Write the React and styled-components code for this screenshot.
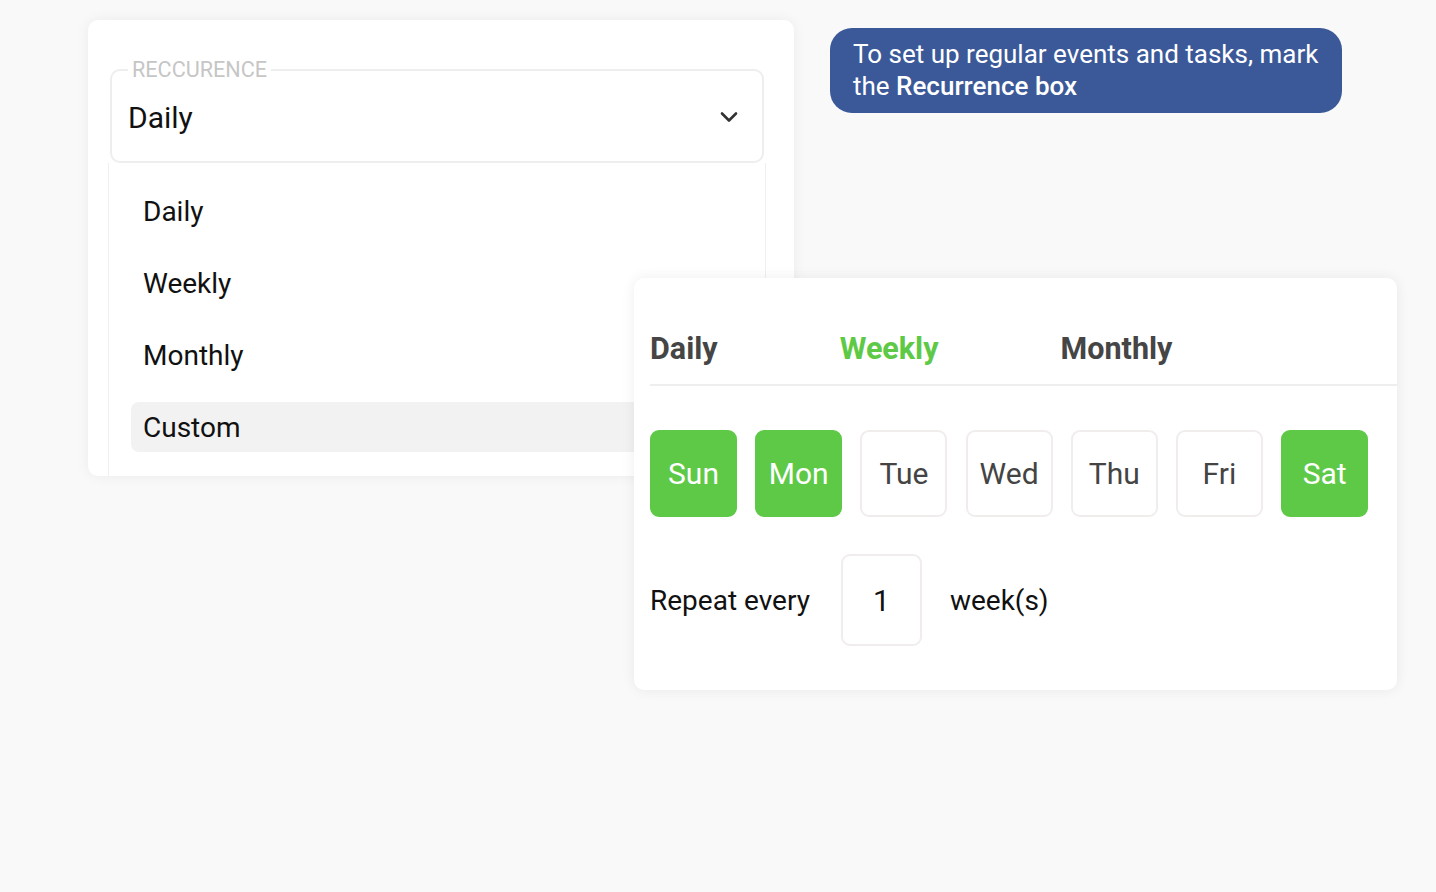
import React from "react";
import styled, { createGlobalStyle } from "styled-components";

const Global = createGlobalStyle`
  html, body { margin: 0; padding: 0; }
  body {
    background: #f9f9f9;
    font-family: Roboto, "Liberation Sans", Arial, sans-serif;
    color: #111;
  }
  * { box-sizing: border-box; }
`;

const Canvas = styled.div`
  position: relative;
  width: 1436px;
  height: 892px;
  padding: 20px 0 0 88px;
  overflow: hidden;
`;

const TopRow = styled.div`
  display: flex;
  align-items: flex-start;
`;

const LeftCard = styled.div`
  width: 706px;
  height: 456px;
  background: #fff;
  border-radius: 10px;
  box-shadow: 0 0 14px rgba(0, 0, 0, 0.06);
  padding: 38px 28px 0 20px;
  display: flex;
  flex-direction: column;
`;

const Field = styled.fieldset`
  margin: 0 2px;
  padding: 0 16px 9px;
  border: 2px solid #eeeeee;
  border-radius: 10px;
  min-width: 0;
`;

const Legend = styled.legend`
  padding: 0 4px;
  font-size: 21.6px;
  line-height: 24px;
  color: #c6c6c6;
`;

const SelectRow = styled.div`
  height: 70px;
  display: flex;
  align-items: center;
  justify-content: space-between;
  padding-right: 8px;
  font-size: 30px;
  color: #111;
`;

const MenuList = styled.div`
  flex: 1;
  border-left: 1.5px solid #efefef;
  border-right: 1.5px solid #efefef;
  padding: 23px 22px 0 22px;
  display: flex;
  flex-direction: column;
  gap: 22px;
`;

const MenuItem = styled.div`
  height: 50px;
  display: flex;
  align-items: center;
  padding-left: 12px;
  font-size: 28px;
  color: #111;
  border-radius: 8px;
  background: ${(p) => (p.$active ? "#f2f2f2" : "transparent")};
`;

const Tip = styled.div`
  margin-left: 36px;
  margin-top: 8px;
  width: 512px;
  height: 85px;
  background: #3b5998;
  border-radius: 22px;
  padding: 10px 20px 0 23px;
  color: #fff;
  font-size: 26px;
  line-height: 32px;
  b { font-weight: 500; }
`;

const RightCard = styled.div`
  position: absolute;
  left: 634px;
  top: 278px;
  width: 763px;
  height: 412px;
  background: #fff;
  border-radius: 10px;
  box-shadow: 0 0 14px rgba(0, 0, 0, 0.07);
  padding: 0 0 0 16px;
`;

const Tabs = styled.div`
  display: flex;
  gap: 122px;
  padding: 52px 0 16px;
  border-bottom: 2px solid #eeeeee;
`;

const Tab = styled.div`
  font-size: 30.5px;
  line-height: 38px;
  font-weight: 700;
  color: ${(p) => (p.$active ? "#5ec946" : "#454545")};
`;

const Days = styled.div`
  display: flex;
  gap: 18.2px;
  margin-top: 44px;
`;

const Day = styled.div`
  width: 87px;
  height: 87px;
  border-radius: 9px;
  display: flex;
  align-items: center;
  justify-content: center;
  font-size: 30px;
  color: ${(p) => (p.$on ? "#fff" : "#444")};
  background: ${(p) => (p.$on ? "#5ec946" : "#fff")};
  border: 2px solid ${(p) => (p.$on ? "#5ec946" : "#f2eded")};
`;

const RepeatRow = styled.div`
  display: flex;
  align-items: center;
  margin-top: 37px;
  font-size: 28px;
  color: #111;
`;

const NumBox = styled.div`
  width: 81px;
  height: 92px;
  margin: 0 28px 0 31px;
  border: 2px solid #f2eded;
  border-radius: 9px;
  display: flex;
  align-items: center;
  justify-content: center;
  font-size: 30px;
  color: #111;
`;

const Chevron = () => (
  <svg width="18" height="12" viewBox="0 0 18 12" fill="none">
    <path d="M2 2.5 L9 9.5 L16 2.5" stroke="#333" strokeWidth="2.6" strokeLinecap="round" strokeLinejoin="round" />
  </svg>
);

const items = ["Daily", "Weekly", "Monthly", "Custom"];
const days = [
  ["Sun", true],
  ["Mon", true],
  ["Tue", false],
  ["Wed", false],
  ["Thu", false],
  ["Fri", false],
  ["Sat", true],
];

export default function App() {
  return (
    <>
      <Global />
      <Canvas>
        <TopRow>
          <LeftCard>
            <Field>
              <Legend>RECCURENCE</Legend>
              <SelectRow>
                <span>Daily</span>
                <Chevron />
              </SelectRow>
            </Field>
            <MenuList>
              {items.map((it) => (
                <MenuItem key={it} $active={it === "Custom"}>
                  {it}
                </MenuItem>
              ))}
            </MenuList>
          </LeftCard>
          <Tip>
            To set up regular events and tasks, mark the <b>Recurrence box</b>
          </Tip>
        </TopRow>
        <RightCard>
          <Tabs>
            <Tab>Daily</Tab>
            <Tab $active>Weekly</Tab>
            <Tab>Monthly</Tab>
          </Tabs>
          <Days>
            {days.map(([d, on]) => (
              <Day key={d} $on={on}>
                {d}
              </Day>
            ))}
          </Days>
          <RepeatRow>
            <span>Repeat every</span>
            <NumBox>1</NumBox>
            <span>week(s)</span>
          </RepeatRow>
        </RightCard>
      </Canvas>
    </>
  );
}
